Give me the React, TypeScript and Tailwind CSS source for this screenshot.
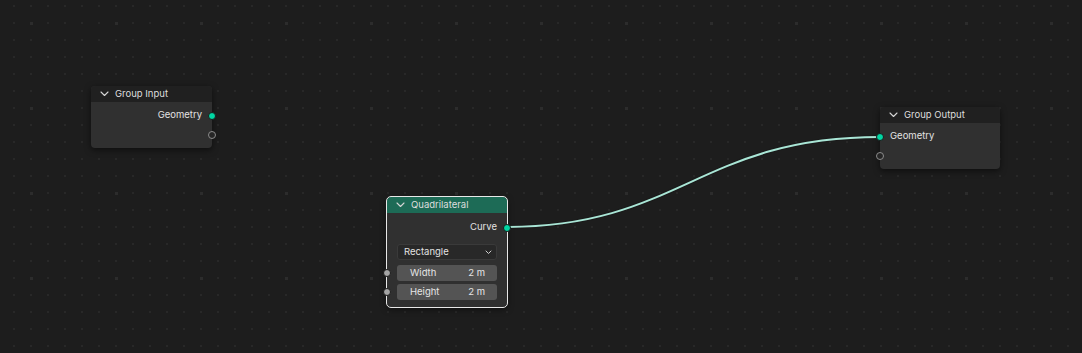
import React from 'react';

const FONT = { fontFamily: 'Inter, "DejaVu Sans", sans-serif' };

function Chevron() {
  return (
    <svg width="9" height="6" viewBox="0 0 9 6" className="shrink-0">
      <path d="M1 1 L4.5 4.5 L8 1" fill="none" stroke="#d6d6d6" strokeWidth="1.1" strokeLinecap="round" strokeLinejoin="round" />
    </svg>
  );
}

function Socket({ side, filled, color }: { side: 'left' | 'right'; filled?: boolean; color?: string }) {
  const pos = side === 'right' ? 'right-[-4px]' : 'left-[-4px]';
  if (!filled) {
    return (
      <span className={`absolute ${pos} top-1/2 -translate-y-1/2 w-[8px] h-[8px] rounded-full border border-[#8c8c8c] bg-[#262626]`} />
    );
  }
  return (
    <span
      className={`absolute ${pos} top-1/2 -translate-y-1/2 w-[8px] h-[8px] rounded-full border border-[#1a1a1a]`}
      style={{ backgroundColor: color }}
    />
  );
}

function Header({ title, teal }: { title: string; teal?: boolean }) {
  return (
    <div
      className={`h-[16px] flex items-center gap-[6px] pl-[9px] text-[9.5px] text-[#dedede] rounded-t-[4px] ${
        teal ? 'bg-[#1d6b56]' : 'bg-[#202020]'
      }`}
    >
      <Chevron />
      <span className="leading-none">{title}</span>
    </div>
  );
}

function GridDots() {
  return (
    <svg className="absolute inset-0" width="1082" height="353">
      <defs>
        <pattern id="minor" x="13" y="5" width="17" height="17" patternUnits="userSpaceOnUse">
          <rect x="0" y="0" width="2" height="2" fill="#282828" />
        </pattern>
        <pattern id="major" x="30" y="22" width="85" height="85" patternUnits="userSpaceOnUse">
          <rect x="0" y="0" width="3" height="3" fill="#2c2c2c" />
        </pattern>
      </defs>
      <rect width="1082" height="353" fill="url(#minor)" />
      <rect width="1082" height="353" fill="url(#major)" />
    </svg>
  );
}

export default function App() {
  return (
    <div className="relative w-[1082px] h-[353px] bg-[#1d1d1d] overflow-hidden select-none" style={FONT}>
      <GridDots />

      {/* link */}
      <svg className="absolute inset-0 pointer-events-none" width="1082" height="353">
        <path d="M506 227 C 680 227, 700 137, 880 137" fill="none" stroke="#1a1a1a" strokeWidth="4" />
        <path d="M506 227 C 680 227, 700 137, 880 137" fill="none" stroke="#a9e6d6" strokeWidth="2" />
      </svg>

      {/* Group Input */}
      <div className="absolute left-[91px] top-[86px] w-[121px] rounded-[4px] bg-[#303030] shadow-[0_2px_6px_rgba(0,0,0,0.55)]">
        <Header title="Group Input" />
        <div className="pt-[4px] pb-[4px]">
          <div className="relative h-[19px] flex items-center justify-end pr-[10px] text-[9.5px] text-[#e2e2e2]">
            Geometry
            <Socket side="right" filled color="#00d6a3" />
          </div>
          <div className="relative h-[19px]">
            <Socket side="right" />
          </div>
        </div>
      </div>

      {/* Quadrilateral */}
      <div className="absolute left-[387px] top-[197px] w-[120px] rounded-[4px] bg-[#303030] outline outline-1 outline-[#e8e8e8] shadow-[0_2px_6px_rgba(0,0,0,0.55)]">
        <Header title="Quadrilateral" teal />
        <div className="pt-[5px] pb-[7px] px-[10px] flex flex-col">
          <div className="relative h-[19px] -mx-[10px] flex items-center justify-end pr-[10px] text-[9.5px] text-[#e2e2e2]">
            Curve
            <Socket side="right" filled color="#00d6a3" />
          </div>
          <div className="mt-[7px] h-[16px] rounded-[3px] bg-[#282828] border border-[#3a3a3a] flex items-center justify-between pl-[6px] pr-[4px] text-[9.5px] text-[#e2e2e2]">
            <span>Rectangle</span>
            <svg width="7" height="5" viewBox="0 0 7 5">
              <path d="M1 1 L3.5 3.5 L6 1" fill="none" stroke="#d0d0d0" strokeWidth="1" strokeLinecap="round" />
            </svg>
          </div>
          <div className="relative mt-[5px] h-[16px]">
            <div className="h-full rounded-[3px] bg-[#545454] flex items-center justify-between pl-[13px] pr-[12px] text-[9.5px] text-[#e6e6e6]">
              <span>Width</span>
              <span>2 m</span>
            </div>
            <span className="absolute left-[-14px] top-1/2 -translate-y-1/2 w-[8px] h-[8px] rounded-full bg-[#a3a3a3] border border-[#1a1a1a]" />
          </div>
          <div className="relative mt-[3px] h-[16px]">
            <div className="h-full rounded-[3px] bg-[#545454] flex items-center justify-between pl-[13px] pr-[12px] text-[9.5px] text-[#e6e6e6]">
              <span>Height</span>
              <span>2 m</span>
            </div>
            <span className="absolute left-[-14px] top-1/2 -translate-y-1/2 w-[8px] h-[8px] rounded-full bg-[#a3a3a3] border border-[#1a1a1a]" />
          </div>
        </div>
      </div>

      {/* Group Output */}
      <div className="absolute left-[880px] top-[107px] w-[120px] rounded-[4px] bg-[#303030] shadow-[0_2px_6px_rgba(0,0,0,0.55)]">
        <Header title="Group Output" />
        <div className="pt-[4px] pb-[4px]">
          <div className="relative h-[19px] flex items-center pl-[10px] text-[9.5px] text-[#e2e2e2]">
            Geometry
            <Socket side="left" filled color="#00d6a3" />
          </div>
          <div className="relative h-[19px]">
            <Socket side="left" />
          </div>
        </div>
      </div>
    </div>
  );
}
